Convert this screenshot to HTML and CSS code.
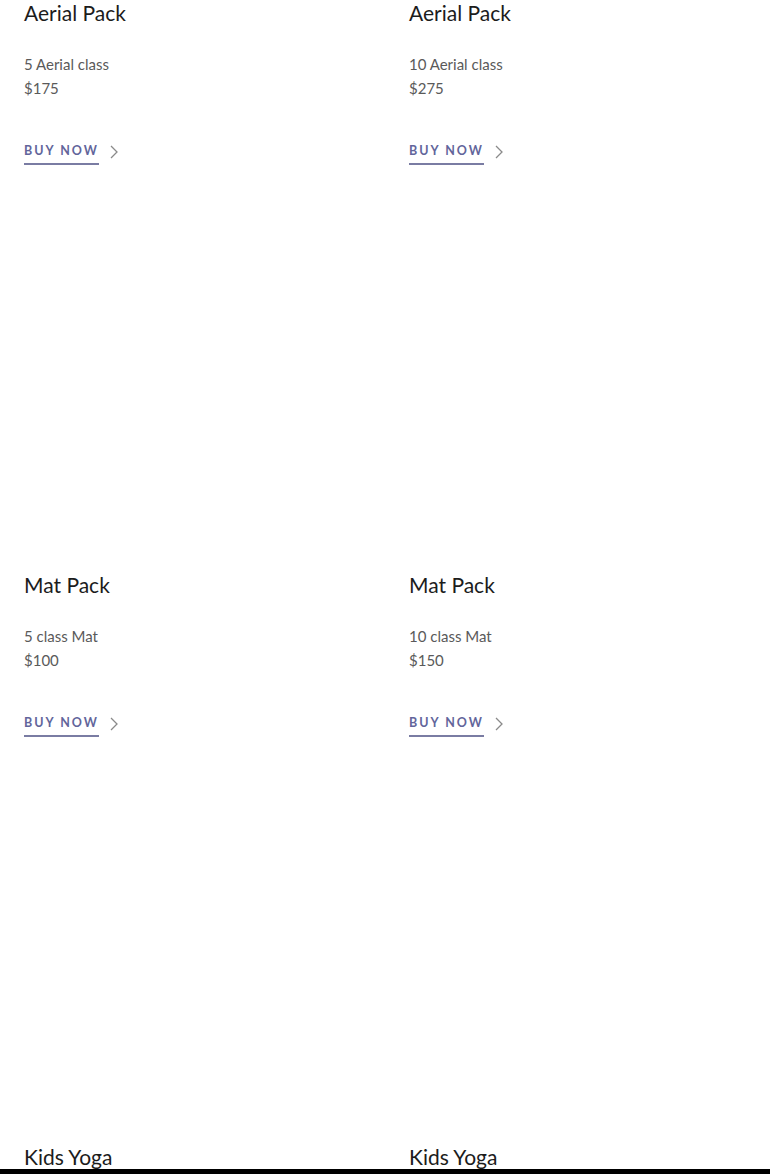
FILE: index.html
```html
<!DOCTYPE html>
<html lang="en">
<head>
<meta charset="utf-8">
<title>Packs</title>
<link rel="stylesheet" href="styles.css">
</head>
<body>
<main class="grid">
  <article class="card">
    <h3 class="title">Aerial Pack</h3>
    <p class="desc">5 Aerial class<br>$175</p>
    <a class="buy" href="#"><span class="buy-text">BUY NOW</span><svg class="chev" width="8" height="14" viewBox="0 0 8 14"><polyline points="1,1 7,7 1,13" fill="none" stroke="#8a8a8a" stroke-width="1.3"/></svg></a>
  </article>
  <article class="card">
    <h3 class="title">Aerial Pack</h3>
    <p class="desc">10 Aerial class<br>$275</p>
    <a class="buy" href="#"><span class="buy-text">BUY NOW</span><svg class="chev" width="8" height="14" viewBox="0 0 8 14"><polyline points="1,1 7,7 1,13" fill="none" stroke="#8a8a8a" stroke-width="1.3"/></svg></a>
  </article>
  <article class="card">
    <h3 class="title">Mat Pack</h3>
    <p class="desc">5 class Mat<br>$100</p>
    <a class="buy" href="#"><span class="buy-text">BUY NOW</span><svg class="chev" width="8" height="14" viewBox="0 0 8 14"><polyline points="1,1 7,7 1,13" fill="none" stroke="#8a8a8a" stroke-width="1.3"/></svg></a>
  </article>
  <article class="card">
    <h3 class="title">Mat Pack</h3>
    <p class="desc">10 class Mat<br>$150</p>
    <a class="buy" href="#"><span class="buy-text">BUY NOW</span><svg class="chev" width="8" height="14" viewBox="0 0 8 14"><polyline points="1,1 7,7 1,13" fill="none" stroke="#8a8a8a" stroke-width="1.3"/></svg></a>
  </article>
  <article class="card">
    <h3 class="title">Kids Yoga</h3>
  </article>
  <article class="card">
    <h3 class="title">Kids Yoga</h3>
  </article>
</main>
<div class="bottom-bar"></div>
</body>
</html>
```

FILE: styles.css
```css
html, body {
  margin: 0;
  padding: 0;
  background: #ffffff;
}
body {
  font-family: Lato, "Open Sans", "Liberation Sans", sans-serif;
  color: #1c1c1c;
  overflow: hidden;
  height: 1174px;
}
.grid {
  display: grid;
  grid-template-columns: 337px 337px;
  column-gap: 48px;
  row-gap: 408px;
  padding: 0 24px;
  margin-top: -1px;
}
.card {
  display: flex;
  flex-direction: column;
  align-items: flex-start;
  height: 164px;
}
.title {
  margin: 0;
  font-size: 21px;
  font-weight: 400;
  line-height: 28px;
  color: #1c1c1c;
}
.desc {
  margin: 25px 0 0;
  font-size: 15px;
  line-height: 24px;
  color: #5a5a5a;
}
.buy {
  display: flex;
  align-items: center;
  gap: 13px;
  margin-top: 42px;
  text-decoration: none;
}
.buy-text {
  display: block;
  font-size: 12.5px;
  font-weight: 700;
  letter-spacing: 2px;
  line-height: 18px;
  color: #62659b;
  padding-bottom: 3px;
  border-bottom: 2px solid #7a7ca3;
  margin-right: -2px;
}
.chev {
  display: block;
  margin-top: -4px;
}
.bottom-bar {
  position: fixed;
  left: 0;
  right: 0;
  bottom: 0;
  height: 5px;
  background: #000000;
}
```
